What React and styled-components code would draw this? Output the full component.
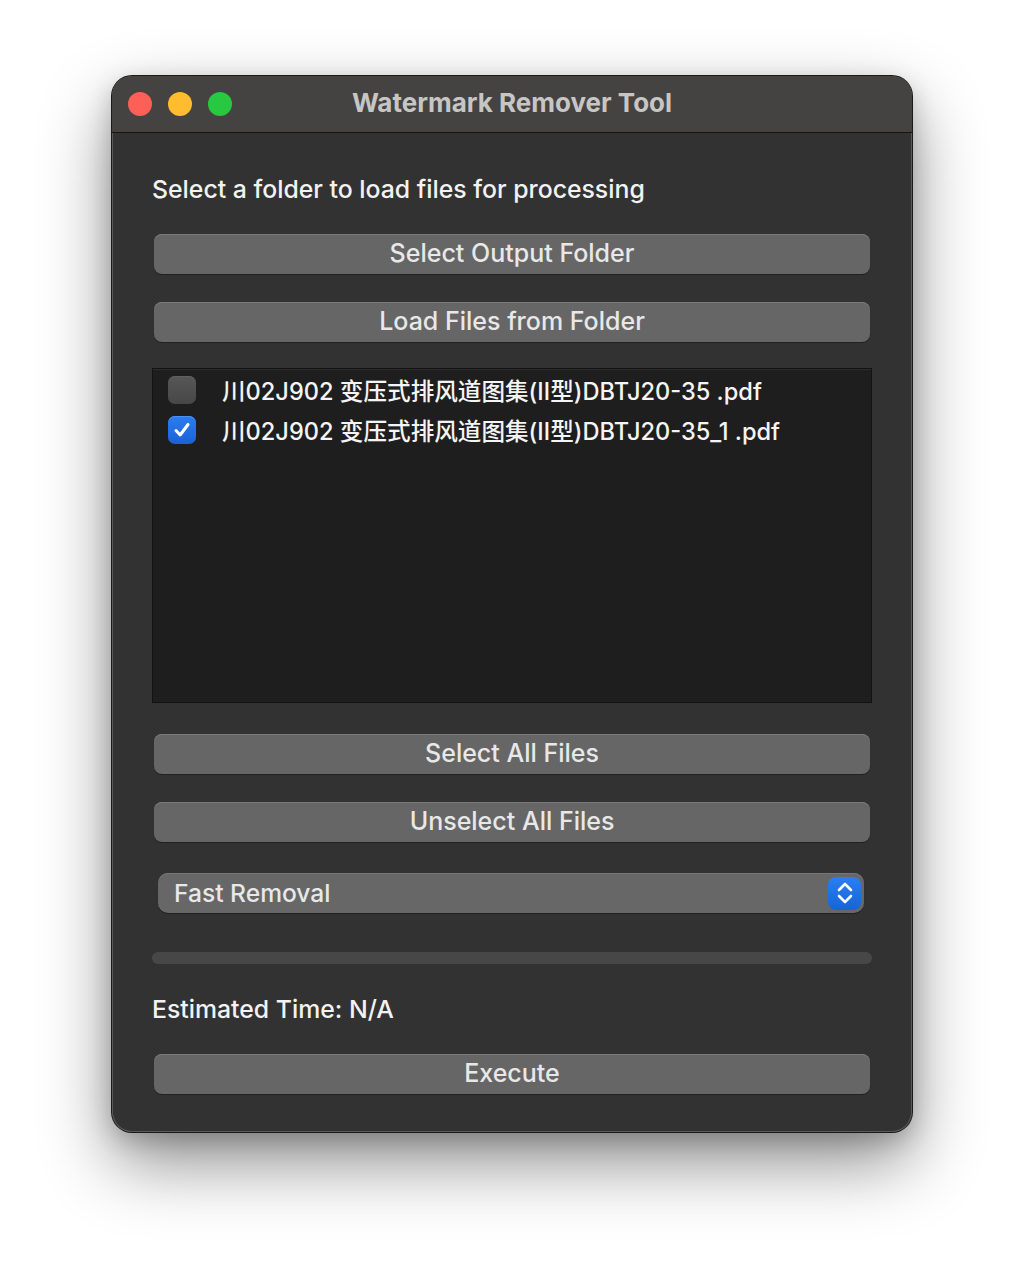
import React, { useState } from 'react'
import styled, { createGlobalStyle } from 'styled-components'

const GlobalStyle = createGlobalStyle`
  html, body {
    margin: 0;
    padding: 0;
    background: #ffffff;
  }
  body {
    font-family: Inter, "Noto Sans", "Noto Sans CJK SC", sans-serif;
  }
`

const Page = styled.div`
  width: 1024px;
  height: 1280px;
  padding: 76px 0 0 112px;
  box-sizing: border-box;
`

const Window = styled.div`
  width: 800px;
  height: 1056px;
  box-sizing: border-box;
  border-radius: 20px;
  background: #323232;
  overflow: hidden;
  display: flex;
  flex-direction: column;
  box-shadow:
    0 0 0 1px #1a1a1a,
    inset 0 0 0 1px #5a5a5a,
    0 30px 70px rgba(0, 0, 0, 0.45),
    0 8px 24px rgba(0, 0, 0, 0.2);
`

const TitleBar = styled.div`
  height: 56px;
  flex: none;
  background: #454341;
  border-bottom: 1px solid #151515;
  display: flex;
  align-items: center;
  padding-left: 16px;
  position: relative;
`

const Light = styled.span`
  width: 24px;
  height: 24px;
  border-radius: 50%;
  background: ${({ color }) => color};
  margin-right: 16px;
`

const Title = styled.div`
  position: absolute;
  left: 0;
  right: 0;
  top: 12px;
  line-height: 30px;
  text-align: center;
  font-size: 26px;
  font-weight: 700;
  color: #c7c6c5;
  pointer-events: none;
`

const Content = styled.div`
  display: flex;
  flex-direction: column;
  padding: 41px 40px 0 40px;
`

const Label = styled.div`
  font-size: 24.8px;
  font-weight: 500;
  line-height: 30px;
  height: 30px;
  color: #f2f2f2;
  margin-top: ${({ top }) => top || 0}px;
`

const Button = styled.button`
  display: block;
  margin: ${({ top }) => top || 0}px 2px 0 2px;
  height: 40px;
  border: none;
  border-radius: 8px;
  background: #666666;
  box-shadow: inset 0 1px 0 #7a7a7a, 0 1px 1px rgba(0, 0, 0, 0.35);
  color: #e8e8e8;
  font-family: inherit;
  font-size: 25px;
  font-weight: 500;
  line-height: 36px;
  padding: 0 0 2px 0;
  cursor: default;
`

const FileList = styled.div`
  margin-top: 26px;
  height: 335px;
  box-sizing: border-box;
  background: #1e1e1e;
  border: 1px solid #121212;
  box-shadow: inset 0 1px 0 #2c2c2c;
  padding-top: 1px;
  display: flex;
  flex-direction: column;
`

const Row = styled.label`
  height: 40px;
  display: flex;
  align-items: center;
  padding-left: 15px;
  color: #f4f4f4;
  font-size: 23.6px;
  font-weight: 500;
  font-family: Inter, "Noto Sans CJK SC", sans-serif;
`

const Box = styled.span`
  width: 28px;
  height: 28px;
  border-radius: 7px;
  flex: none;
  margin-right: 26px;
  display: flex;
  align-items: center;
  justify-content: center;
  background: ${({ checked }) =>
    checked ? 'linear-gradient(#2a7df0, #1a62d6)' : 'linear-gradient(#575757, #474747)'};
  box-shadow: inset 0 1px 0 ${({ checked }) => (checked ? '#4a90f5' : '#606060')};
`

const Select = styled.div`
  margin: 31px 8px 0 6px;
  height: 40px;
  border-radius: 10px;
  background: #676767;
  box-shadow: inset 0 1px 0 #777, 0 1px 1px rgba(0, 0, 0, 0.35);
  display: flex;
  align-items: center;
  justify-content: space-between;
  padding: 0 3px 0 16px;
  color: #e8e8e8;
  font-size: 24.6px;
  font-weight: 500;
`

const Stepper = styled.span`
  width: 33px;
  height: 33px;
  border-radius: 8px;
  background: linear-gradient(#2a7ff0, #1565d8);
  display: flex;
  align-items: center;
  justify-content: center;
`

const Progress = styled.div`
  margin-top: 39px;
  height: 12px;
  border-radius: 6px;
  background: #474747;
`

const Check = () => (
  <svg width="20" height="20" viewBox="0 0 20 20">
    <path d="M4 10.5 L8.2 15 L16 4.5" fill="none" stroke="#fff" strokeWidth="3" strokeLinecap="round" strokeLinejoin="round" />
  </svg>
)

const Chevrons = () => (
  <svg width="20" height="26" viewBox="0 0 20 26">
    <path d="M4 10 L10 4 L16 10" fill="none" stroke="#fff" strokeWidth="2.6" strokeLinecap="round" strokeLinejoin="round" />
    <path d="M4 16 L10 22 L16 16" fill="none" stroke="#fff" strokeWidth="2.6" strokeLinecap="round" strokeLinejoin="round" />
  </svg>
)

const files = [
  { name: '川02J902 变压式排风道图集(Ⅱ型)DBTJ20-35 .pdf', checked: false },
  { name: '川02J902 变压式排风道图集(Ⅱ型)DBTJ20-35_1 .pdf', checked: true }
]

const App = () => {
  const [items, setItems] = useState(files)

  const toggle = (i) =>
    setItems((prev) => prev.map((f, j) => (j === i ? { ...f, checked: !f.checked } : f)))

  return (
    <Page>
      <GlobalStyle />
      <Window>
        <TitleBar>
          <Light color="#fe5f57" />
          <Light color="#febc2e" />
          <Light color="#28c840" />
          <Title>Watermark Remover Tool</Title>
        </TitleBar>
        <Content>
          <Label>Select a folder to load files for processing</Label>
          <Button top={30}>Select Output Folder</Button>
          <Button top={28}>Load Files from Folder</Button>
          <FileList>
            {items.map((f, i) => (
              <Row key={i} onClick={() => toggle(i)}>
                <Box checked={f.checked}>{f.checked ? <Check /> : null}</Box>
                {f.name}
              </Row>
            ))}
          </FileList>
          <Button top={31}>Select All Files</Button>
          <Button top={28}>Unselect All Files</Button>
          <Select>
            Fast Removal
            <Stepper><Chevrons /></Stepper>
          </Select>
          <Progress />
          <Label top={30}>Estimated Time: N/A</Label>
          <Button top={30}>Execute</Button>
        </Content>
      </Window>
    </Page>
  )
}

export default App
